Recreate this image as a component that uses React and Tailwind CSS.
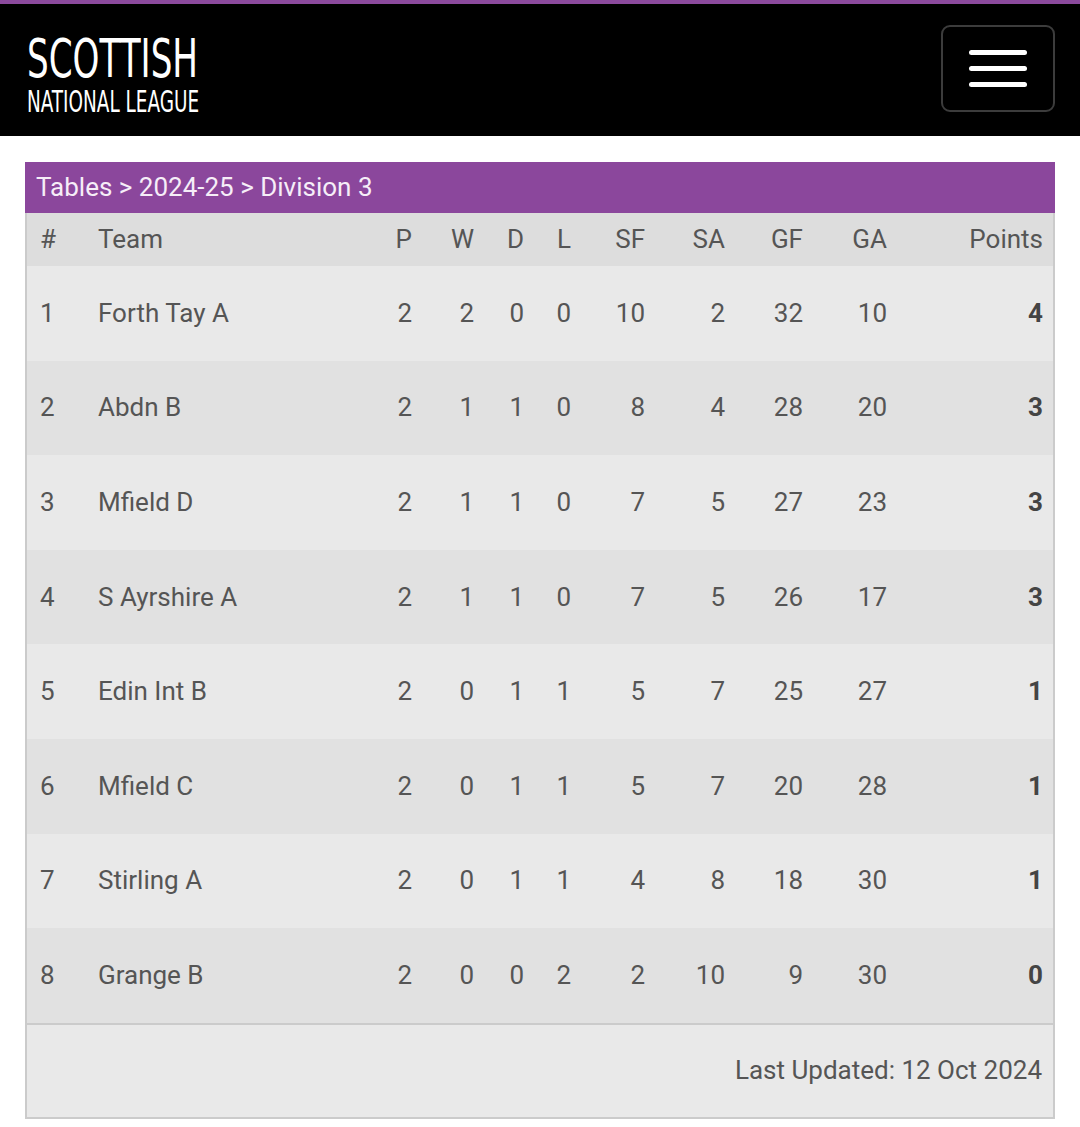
const rows = [
  [1, "Forth Tay A", 2, 2, 0, 0, 10, 2, 32, 10, 4],
  [2, "Abdn B", 2, 1, 1, 0, 8, 4, 28, 20, 3],
  [3, "Mfield D", 2, 1, 1, 0, 7, 5, 27, 23, 3],
  [4, "S Ayrshire A", 2, 1, 1, 0, 7, 5, 26, 17, 3],
  [5, "Edin Int B", 2, 0, 1, 1, 5, 7, 25, 27, 1],
  [6, "Mfield C", 2, 0, 1, 1, 5, 7, 20, 28, 1],
  [7, "Stirling A", 2, 0, 1, 1, 4, 8, 18, 30, 1],
  [8, "Grange B", 2, 0, 0, 2, 2, 10, 9, 30, 0],
];

const cols =
  "grid grid-cols-[58px_282px_32px_62px_50px_47px_74px_80px_78px_84px_156px] items-center pl-[13px] pr-[11px]";

const heads = ["P", "W", "D", "L", "SF", "SA", "GF", "GA"];

const App = () => {
  return (
    <div
      className="min-h-[1127px] bg-white"
      style={{ fontFamily: "Roboto, 'Liberation Sans', sans-serif" }}
    >
      <div className="h-[4px] bg-[#8b4a9c]" />
      <header className="flex h-[132px] items-start justify-between bg-black pl-[27px] pr-[25px]">
        <div
          className="flex flex-col items-start pt-[28px] text-white"
          style={{ fontFamily: "'Liberation Sans Narrow', 'DejaVu Sans Condensed', sans-serif" }}
        >
          <span className="block h-[38px] origin-top-left scale-y-[1.4] text-[38px] leading-none">
            SCOTTISH
          </span>
          <span className="mt-[17px] block h-[20px] origin-top-left scale-y-[1.47] text-[20.5px] leading-none">
            NATIONAL LEAGUE
          </span>
        </div>
        <button className="mt-[21px] flex h-[87px] w-[114px] flex-col items-center justify-center gap-[11px] rounded-[9px] border-2 border-[#3c3c3c] bg-black">
          <span className="h-[5px] w-[58px] rounded-full bg-white" />
          <span className="h-[5px] w-[58px] rounded-full bg-white" />
          <span className="h-[5px] w-[58px] rounded-full bg-white" />
        </button>
      </header>

      <div className="mx-[25px] mt-[26px]">
        <div className="flex h-[51px] items-center bg-[#8b479c] px-[11px] text-[26px] text-[#f6eef8]">
          Tables &gt; 2024-25 &gt; Division 3
        </div>
        <div className="border-x-2 border-b-2 border-[#cbcbcb] text-[26px] text-[#555555]">
          <div className={`${cols} h-[53px] bg-[#dddddd]`}>
            <div>#</div>
            <div>Team</div>
            {heads.map((h) => (
              <div key={h} className="text-right">
                {h}
              </div>
            ))}
            <div className="text-right">Points</div>
          </div>
          {rows.map((r, i) => (
            <div
              key={r[0]}
              className={`${cols} h-[94.6px] ${i % 2 === 0 ? "bg-[#e9e9e9]" : "bg-[#e1e1e1]"}`}
            >
              <div>{r[0]}</div>
              <div>{r[1]}</div>
              {r.slice(2, 10).map((v, j) => (
                <div key={j} className="text-right">
                  {v}
                </div>
              ))}
              <div className="text-right font-bold text-[#444444]">{r[10]}</div>
            </div>
          ))}
          <div className="flex h-[94px] items-center justify-end border-t-2 border-[#cbcbcb] bg-[#e9e9e9] pr-[11px]">
            Last Updated: 12 Oct 2024
          </div>
        </div>
      </div>
    </div>
  );
};

export default App;
